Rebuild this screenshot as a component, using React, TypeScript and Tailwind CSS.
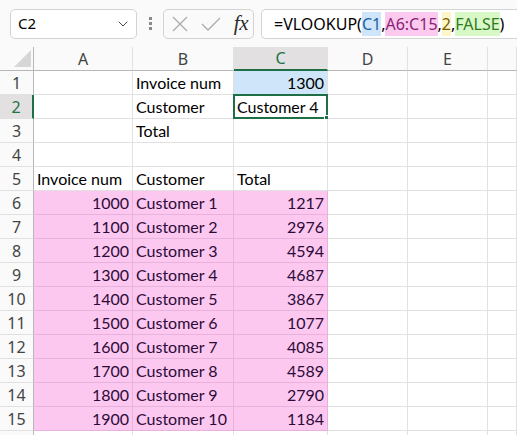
import { ChevronDown } from 'lucide-react';

const cols = ['A', 'B', 'C', 'D', 'E', ''];

type Cell = { text?: string; align?: 'left' | 'right'; pink?: boolean; blue?: boolean; active?: boolean };

const invoices = [
  [1000, 'Customer 1', 1217],
  [1100, 'Customer 2', 2976],
  [1200, 'Customer 3', 4594],
  [1300, 'Customer 4', 4687],
  [1400, 'Customer 5', 3867],
  [1500, 'Customer 6', 1077],
  [1600, 'Customer 7', 4085],
  [1700, 'Customer 8', 4589],
  [1800, 'Customer 9', 2790],
  [1900, 'Customer 10', 1184],
] as const;

// rows 1..16, each with cells A..F
const buildRows = (): Cell[][] => {
  const rows: Cell[][] = [
    [{}, { text: 'Invoice num' }, { text: '1300', align: 'right', blue: true }],
    [{}, { text: 'Customer' }, { text: 'Customer 4', active: true }],
    [{}, { text: 'Total' }, {}],
    [{}, {}, {}],
    [{ text: 'Invoice num' }, { text: 'Customer' }, { text: 'Total' }],
  ];
  invoices.forEach(([num, name, total]) => {
    rows.push([
      { text: String(num), align: 'right', pink: true },
      { text: name, pink: true },
      { text: String(total), align: 'right', pink: true },
    ]);
  });
  rows.push([{}, {}, {}]);
  return rows.map((r) => [...r, {}, {}, {}]);
};

function DataCell({ cell }: { cell: Cell }) {
  const base = 'relative h-6 border-r border-b flex items-end pb-[2px] px-[3px] text-[16px] leading-[18px] whitespace-nowrap';
  const tone = cell.pink
    ? 'bg-[#fdc8ef] border-[#e9b2dc] text-[#2c0b3a]'
    : cell.blue
      ? 'bg-[#cfe5f9] border-[#e1e1e1] text-black'
      : 'bg-white border-[#e1e1e1] text-black';
  return (
    <div className={`${base} ${tone} ${cell.align === 'right' ? 'justify-end' : 'justify-start'}`}>
      {cell.text}
      {cell.active && (
        <div className="absolute -left-px -top-px -right-px -bottom-px border-2 border-[#1f6f46] pointer-events-none">
          <div className="absolute -right-[4px] -bottom-[4px] w-[6px] h-[6px] bg-[#1f6f46] border border-white" />
        </div>
      )}
    </div>
  );
}

export default function App() {
  const rows = buildRows();

  return (
    <div className="w-[517px] h-[435px] overflow-hidden bg-[#fafafa]" style={{ fontFamily: 'Lato, "Liberation Sans", sans-serif' }}>
      {/* formula bar */}
      <div className="h-[47px] flex items-center pl-[10px] font-['Noto_Sans',sans-serif]">
        <div className="shrink-0 w-[127px] h-[30px] rounded-[5px] border border-[#d3d3d3] bg-white flex items-center justify-between pl-[7px] pr-[5px]">
          <span className="text-[15px] text-black">C2</span>
          <ChevronDown className="w-[16px] h-[16px] text-[#444]" strokeWidth={1.5} />
        </div>
        <div className="shrink-0 w-[26px] flex flex-col items-center gap-[2px]">
          <span className="w-[3px] h-[3px] bg-[#8a8a8a]" />
          <span className="w-[3px] h-[3px] bg-[#8a8a8a]" />
          <span className="w-[3px] h-[3px] bg-[#8a8a8a]" />
        </div>
        <div className="shrink-0 w-[91px] h-[30px] rounded-[5px] border border-[#d3d3d3] bg-[#fafafa] flex items-center pl-[8px] pr-[5px] justify-between">
          <svg width="16" height="16" viewBox="0 0 16 16" fill="none" stroke="#ababab" strokeWidth="1.3">
            <path d="M1 1 L15 15 M15 1 L1 15" />
          </svg>
          <svg width="20" height="14" viewBox="0 0 20 14" fill="none" stroke="#ababab" strokeWidth="1.3">
            <path d="M1 7 L7 13 L19 1" />
          </svg>
          <span className="italic text-[21px] leading-none text-[#2b2b2b] font-['Liberation_Serif',serif] tracking-[-0.5px]">fx</span>
        </div>
        <div className="shrink-0 ml-[7px] w-[280px] h-[30px] rounded-l-[5px] border border-r-0 border-[#d3d3d3] bg-white flex items-center pl-[12px] text-[16px] text-black whitespace-nowrap">
          <span>=VLOOKUP(</span>
          <span className="bg-[#cfe5f9] text-[#1a5fa8]">C1</span>
          <span>,</span>
          <span className="bg-[#fcc9ef] text-[#8a1f73]">A6:C15</span>
          <span>,</span>
          <span className="bg-[#fdf6c9] text-[#7a5a00]">2</span>
          <span>,</span>
          <span className="bg-[#d9f8c8] text-[#2f7a1d]">FALSE</span>
          <span>)</span>
        </div>
      </div>

      {/* sheet */}
      <div className="grid grid-cols-[34px_99px_101px_94px_80px_80px_1fr]">
        {/* column headers */}
        <div className="h-[24px] border-r border-b border-[#b7b7b7] bg-[#fafafa] relative">
          <svg className="absolute left-[14px] top-[3px]" width="17" height="17" viewBox="0 0 17 17">
            <path d="M17 0 L17 17 L0 17 Z" fill="#d6d6d6" />
          </svg>
        </div>
        {cols.map((c) => (
          <div
            key={c || 'F'}
            className={`h-[24px] flex items-center justify-center text-[16px] font-['Noto_Sans',sans-serif] border-r border-[#e1e1e1] ${
              c === 'C'
                ? 'bg-[#e2e0e0] text-[#217346] border-b-2 border-b-[#1f6f46]'
                : 'bg-[#fafafa] text-[#444] border-b border-b-[#b7b7b7]'
            }`}
          >
            {c}
          </div>
        ))}

        {rows.map((row, i) => {
          const n = i + 1;
          return [
            <div
              key={`h${n}`}
              className={`h-6 flex items-center justify-center text-[16px] font-['Noto_Sans',sans-serif] border-b border-b-[#e1e1e1] ${
                n === 2
                  ? 'bg-[#e2e0e0] text-[#217346] border-r-2 border-r-[#1f6f46]'
                  : 'bg-[#fafafa] text-[#444] border-r border-r-[#b7b7b7]'
              }`}
            >
              {n <= 15 ? n : ''}
            </div>,
            ...row.map((cell, j) => <DataCell key={`${n}-${j}`} cell={cell} />),
          ];
        })}
      </div>
    </div>
  );
}
